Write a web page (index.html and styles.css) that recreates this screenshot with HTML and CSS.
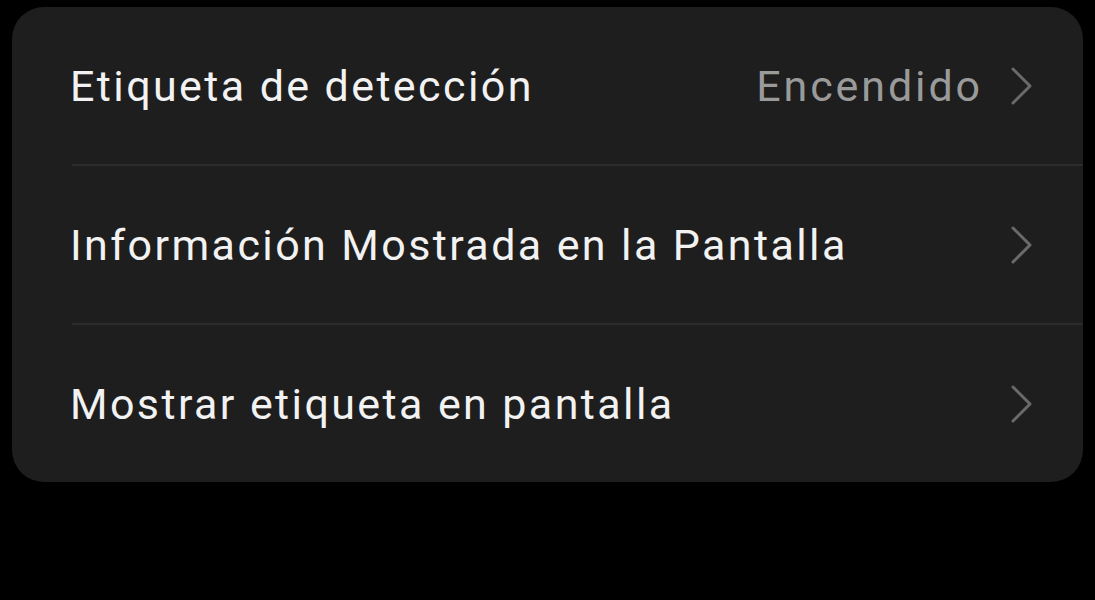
FILE: index.html
```html
<!DOCTYPE html>
<html lang="es">
<head>
    <meta charset="UTF-8">
    <meta name="viewport" content="width=device-width, initial-scale=1.0">
    <title>Etiqueta de detección</title>
    <link rel="stylesheet" href="styles.css">
</head>
<body>

<div class="card">
    <div class="item">
        <div class="item-body">
            <span class="label">Etiqueta de detección</span>
            <span class="value">Encendido</span>
            <svg class="chevron" viewBox="0 0 24 40"><polyline points="4,3 21,20 4,37"/></svg>
        </div>
    </div>
    <div class="item">
        <div class="item-body">
            <span class="label">Información Mostrada en la Pantalla</span>
            <svg class="chevron" viewBox="0 0 24 40"><polyline points="4,3 21,20 4,37"/></svg>
        </div>
    </div>
    <div class="item">
        <div class="item-body last">
            <span class="label">Mostrar etiqueta en pantalla</span>
            <svg class="chevron" viewBox="0 0 24 40"><polyline points="4,3 21,20 4,37"/></svg>
        </div>
    </div>
</div>

</body>
</html>
```

FILE: styles.css
```css
body {
    margin: 0;
    background-color: #000;
    font-family: Roboto, "Noto Sans", sans-serif;
}
.card {
    margin: 7px 12px;
    width: 1071px;
    height: 475px;
    background: #1e1e1e;
    border-radius: 32px;
    overflow: hidden;
}
.item {
    padding-left: 60px;
}
.item-body {
    display: flex;
    align-items: center;
    height: 157px;
    padding-right: 50px;
    border-bottom: 2px solid #2b2b2b;
}
.item-body.last {
    border-bottom: none;
}
.label {
    flex: 1;
    margin-left: -2px;
    color: #f2f2f2;
    font-size: 43px;
    letter-spacing: 2.4px;
}
.value {
    color: #9a9a9a;
    font-size: 43px;
    letter-spacing: 2.9px;
    margin-right: 26px;
}
.chevron {
    width: 24px;
    height: 40px;
    fill: none;
    stroke: #6a6a6a;
    stroke-width: 3;
    stroke-linecap: round;
    stroke-linejoin: round;
}
```
